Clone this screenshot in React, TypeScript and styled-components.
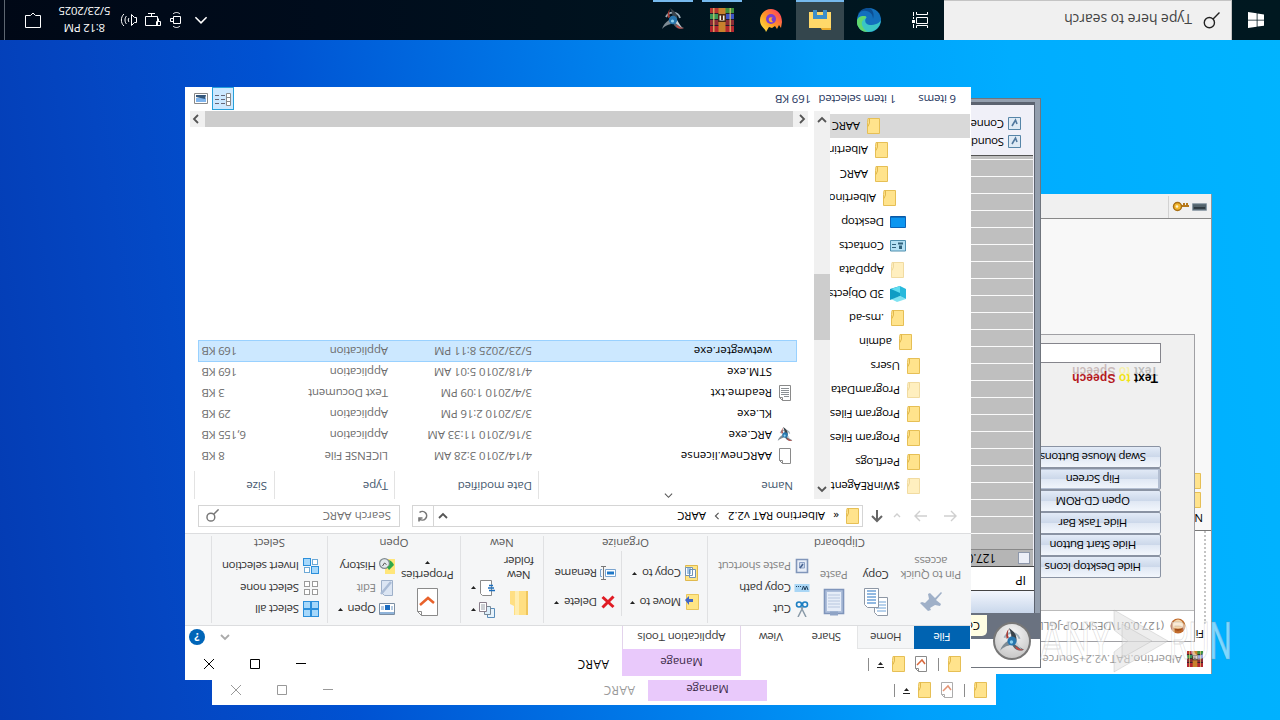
import React from 'react';
import styled, { createGlobalStyle } from 'styled-components';

const GlobalStyle = createGlobalStyle`
  * {
    box-sizing: border-box;
  }

  body {
    margin: 0;
    overflow: hidden;
    background: #0050cc;
  }

  svg {
    display: block;
    flex: none;
  }
`;

const Stage = styled.div`
  position: relative;
  width: 1280px;
  height: 720px;
  overflow: hidden;
`;

/* the whole desktop is turned upside down */
const Screen = styled.div`
  position: relative;
  width: 1280px;
  height: 720px;
  display: flex;
  flex-direction: column;
  transform: rotate(180deg);
  font-family: 'Open Sans', 'Noto Sans', sans-serif;
  font-size: 11.5px;
  letter-spacing: -0.33px;
  line-height: 14px;
  color: #000;
  white-space: nowrap;
  background: linear-gradient(
    262deg,
    #043bb2 0%,
    #0446c2 13%,
    #0052d2 26%,
    #007cea 48%,
    #009ffb 66%,
    #00adff 80%,
    #00b4ff 100%
  );
`;

const Desktop = styled.div`
  position: relative;
  flex: 1;
`;

const Spacer = styled.span<{ $w?: number; $h?: number }>`
  flex: none;
  width: ${props => props.$w || 0}px;
  height: ${props => props.$h || 0}px;
`;

/* ---------- icons ---------- */

const FolderIcon = ({ pale }: { pale?: boolean }) => (
  <svg width="16" height="16" viewBox="0 0 16 16" opacity={pale ? 0.55 : 1}>
    <path d="M2.500 .5h12v11l-.5 4h-11.500z" fill="#ffe38c" stroke="#e6bf55" />
    <path d="M12.500 15.500V11l1.500-3.500" fill="none" stroke="#e2b84a" />
  </svg>
);

const PageIcon = ({ check, lines, faded }: { check?: boolean; lines?: boolean; faded?: boolean }) => (
  <svg width="16" height="16" viewBox="0 0 16 16" opacity={faded ? 0.7 : 1}>
    <path d="M2.500 .5h8l3 3v12h-11z" fill="#fff" stroke="#8a8a8a" />
    <path d="M10.500 .5v3h3" fill="none" stroke="#8a8a8a" />
    {check && <path d="M4 8l3 4 5-5" fill="none" stroke="#d9683c" strokeWidth="1.500" />}
    {lines && <path d="M4 4.500h5M4 6.500h8M4 8.500h8M4 10.500h8M4 12.500h8" stroke="#8b9094" />}
  </svg>
);

const ArcIcon = ({ size = 16 }: { size?: number }) => (
  <svg width={size} height={size} viewBox="0 0 24 24">
    <path d="M5 14a7.500 7.500 0 0 0 14 1" fill="none" stroke="#9fb0ba" strokeWidth="1.800" />
    <path d="M1 4c5-2 9 0 11 5l-4 3C7 8 5 6 1 4z" fill="#59636b" />
    <path d="M1 4c3-1 6-1 8 2l-1 1C6 5 4 4 1 4z" fill="#c84a42" />
    <path d="M23 3c-3 3-5 4-9 5l2 4c3-2 6-5 7-9z" fill="#7e8b94" />
    <path d="M15 24c-5-3-8-7-7-12l5 2c-1 3 0 6 2 10z" fill="#39434a" />
    <path d="M3 4l8 6-3 2z" fill="#c8d1d7" />
    <circle cx="12" cy="12" r="4.200" fill="#2876ad" />
    <circle cx="12.500" cy="11" r="1.600" fill="#8fd0ee" />
    <path d="M15 23c2-2 3-5 2-9l-2 1c1 3 1 5 0 8z" fill="#a63a34" />
  </svg>
);

const WinrarIcon = ({ size = 24 }: { size?: number }) => (
  <svg width={size} height={size} viewBox="0 0 24 24">
    <path d="M0 0h24v6H0z" fill="#b3262f" />
    <path d="M0 6h24v6H0z" fill="#8c2c36" />
    <path d="M0 12h24v6H0z" fill="#3d53c4" />
    <path d="M14 12h10v6H14z" fill="#3a9656" />
    <path d="M0 18h24v6H0z" fill="#3f8f3c" />
    <path d="M14 18h10v6H14z" fill="#b8352f" />
    <path d="M0 6h24v1H0zM0 12h24v1H0zM0 18h24v1H0z" fill="#231c2b" />
    <path d="M3 0h1.500v24H3zM19.500 0H21v24h-1.500z" fill="#e6cf72" opacity=".7" />
    <path d="M8.500 0h7v24h-7z" fill="#c8812c" />
    <path d="M8 10h8v8H8z" fill="#4a2b16" />
    <path d="M9.500 11.500h5v5h-5z" fill="#f0efe6" />
    <path d="M11 12h2v5h-2z" fill="#5a3620" />
  </svg>
);

const Chevron = ({ dir, color = '#555', size = 10, w = 1.8 }: { dir: string; color?: string; size?: number; w?: number }) => {
  const paths: Record<string, string> = {
    up: 'M1 7l4-4 4 4',
    down: 'M1 3l4 4 4-4',
    left: 'M7 1L3 5l4 4',
    right: 'M3 1l4 4-4 4'
  };
  return (
    <svg width={size} height={size} viewBox="0 0 10 10">
      <path d={paths[dir]} fill="none" stroke={color} strokeWidth={w} />
    </svg>
  );
};

const Caret = ({ color = '#222' }: { color?: string }) => (
  <svg width="5" height="3" viewBox="0 0 5 3">
    <path d="M0 0h5L2.500 3z" fill={color} />
  </svg>
);

/* ---------- explorer window ---------- */

const ExplorerFrame = styled.div<{ $back?: boolean }>`
  position: absolute;
  left: ${props => (props.$back ? 284 : 309)}px;
  top: ${props => (props.$back ? 15 : 40)}px;
  width: ${props => (props.$back ? 784 : 786)}px;
  height: ${props => (props.$back ? 560 : 593)}px;
  display: flex;
  flex-direction: column;
  background: #fff;
  overflow: hidden;
`;

const TitleBar = styled.div<{ $inactive?: boolean }>`
  height: 31px;
  flex: none;
  display: flex;
  align-items: center;
  padding-bottom: ${props => (props.$inactive ? 2 : 0)}px;
`;

const QuickBar = styled.div<{ $inactive?: boolean }>`
  display: flex;
  align-items: center;
  width: ${props => (props.$inactive ? 229 : 230)}px;
  padding-left: ${props => (props.$inactive ? 7 : 8)}px;
`;

const QuickSep = styled.i<{ $l: number; $r: number }>`
  width: 1px;
  height: 13px;
  margin: 0 ${props => props.$r}px 0 ${props => props.$l}px;
  background: #8c8c8c;
`;

const QuickArrow = styled.span`
  width: 7px;
  height: 7px;
  margin-left: 7px;
  border-top: 1px solid #222;
  padding: 2px 0 0 1px;
`;

const ManageTab = styled.div<{ $inactive?: boolean }>`
  width: 119px;
  height: 27px;
  margin-bottom: ${props => (props.$inactive ? -2 : 0)}px;
  align-self: flex-end;
  padding-top: ${props => (props.$inactive ? 5 : 7)}px;
  text-align: center;
  letter-spacing: -0.1px;
  background: #e9c9fb;
  color: #3c2a48;
`;

const WindowTitle = styled.div<{ $inactive?: boolean }>`
  flex: 1;
  padding-left: 13px;
  font-size: 12px;
  letter-spacing: 0.35px;
  color: ${props => (props.$inactive ? '#999' : '#000')};
`;

const Controls = styled.div<{ $inactive?: boolean }>`
  display: flex;
  margin-right: 1px;
  color: ${props => (props.$inactive ? '#999' : '#000')};
`;

const Control = styled.div`
  width: 46px;
  display: flex;
  justify-content: center;
`;

const TabRow = styled.div`
  height: 23px;
  flex: none;
  display: flex;
  line-height: 23px;
  text-align: center;
  color: #3b3b3b;
`;

const FileTab = styled.div`
  width: 56px;
  margin-left: 1px;
  background: #0063b1;
  color: #fff;
`;

const Tab = styled.div<{ $w: number; $active?: boolean; $tools?: boolean }>`
  width: ${props => props.$w}px;
  line-height: ${props => (props.$active ? 22 : 24)}px;
  background: ${props => (props.$active ? '#f5f6f7' : 'transparent')};
  border: solid ${props => (props.$tools ? '#e3d3ec' : '#e4e5e6')};
  border-width: ${props => (props.$active ? '1px 1px 0 0' : props.$tools ? '0 1px' : '0')};
  margin-left: ${props => (props.$tools ? 5 : 0)}px;
  letter-spacing: ${props => (props.$tools ? -0.2 : -0.35)}px;
`;

const TabEnd = styled.div`
  flex: 1;
  display: flex;
  justify-content: flex-end;
  align-items: center;
  gap: 15px;
  padding: 0 4px 0 0;
`;

const Help = styled.span`
  width: 16px;
  height: 16px;
  border-radius: 50%;
  background: #0065b8;
  color: #fff;
  font-weight: 700;
  font-size: 11px;
  line-height: 16px;
`;

const Ribbon = styled.div`
  height: 93px;
  flex: none;
  display: flex;
  background: #f5f6f7;
  border: solid #dcdddf;
  border-width: 1px 0;
`;

const Group = styled.div<{ $w: number }>`
  width: ${props => props.$w}px;
  margin: 2px 0;
  display: flex;
  flex-direction: column;
  border-right: 1px solid #e0e1e3;
`;

const GroupBody = styled.div<{ $pad: number }>`
  height: 74px;
  display: flex;
  padding-left: ${props => props.$pad}px;
`;

const GroupLabel = styled.div`
  text-align: center;
  color: #5a5a5a;
  letter-spacing: -0.15px;
`;

const BigButton = styled.div<{ $w: number; $off?: boolean }>`
  width: ${props => props.$w}px;
  padding-top: 7px;
  display: flex;
  flex-direction: column;
  align-items: center;
  text-align: center;
  color: ${props => (props.$off ? '#848484' : '#333')};

  svg:first-child {
    margin-bottom: 6px;
  }
`;

const SmallCol = styled.div<{ $h: number; $top: number; $l?: number; $w?: number }>`
  width: ${props => (props.$w ? `${props.$w}px` : 'auto')};
  margin-left: ${props => props.$l || 0}px;
  padding-top: ${props => props.$top}px;

  > div {
    height: ${props => props.$h}px;
  }
`;

const SmallButton = styled.div<{ $off?: boolean; $gap?: number }>`
  display: flex;
  align-items: center;
  gap: ${props => props.$gap || 3}px;
  color: ${props => (props.$off ? '#848484' : '#333')};

  svg:nth-of-type(2) {
    margin-left: 2px;
  }
`;

const ColSep = styled.i`
  width: 1px;
  height: 65px;
  margin-top: 7px;
  background: #dfe0e2;
`;

const NavRow = styled.div`
  height: 34px;
  flex: none;
  display: flex;
  align-items: center;
  padding: 0 13px 0 14px;
`;

const NavArrows = styled.div`
  width: 94px;
  display: flex;
  align-items: center;
`;

const Address = styled.div`
  width: 451px;
  height: 22px;
  display: flex;
  align-items: center;
  border: 1px solid #d5d5d5;
  padding-left: 1px;
  letter-spacing: -0.05px;
`;

const Crumb = styled.span<{ $w: number }>`
  width: ${props => props.$w}px;
`;

const Refresh = styled.div`
  width: 21px;
  height: 20px;
  margin-left: 4px;
  border-left: 1px solid #d5d5d5;
  display: flex;
  align-items: center;
  justify-content: center;
`;

const SearchBox = styled.div`
  width: 202px;
  height: 22px;
  margin-left: auto;
  padding: 0 7px 0 8px;
  display: flex;
  align-items: center;
  justify-content: space-between;
  border: 1px solid #d5d5d5;
  color: #6f6f6f;
  letter-spacing: 0;
`;

const Content = styled.div`
  height: 388px;
  flex: none;
  display: flex;
`;

const Tree = styled.div`
  width: 141px;
  padding-top: 1px;
  overflow: hidden;
  letter-spacing: -0.25px;
`;

const TreeItem = styled.div<{ $indent: number; $selected?: boolean }>`
  height: 24px;
  display: flex;
  align-items: center;
  gap: 6px;
  margin-left: 1px;
  padding-left: ${props => 48 + props.$indent * 8}px;
  background: ${props => (props.$selected ? '#d9d9d9' : 'transparent')};
`;

const TreeScroll = styled.div`
  width: 16px;
  display: flex;
  flex-direction: column;
  align-items: center;
  justify-content: space-between;
  padding: 5px 0 4px;
  background: #f0f0f0;
`;

const VThumb = styled.div`
  width: 16px;
  height: 66px;
  margin-bottom: 5px;
  background: #cdcdcd;
`;

const ListPane = styled.div`
  flex: 1;
  display: flex;
  flex-direction: column;
  padding-left: 17px;
`;

const HeaderRow = styled.div`
  height: 28px;
  flex: none;
  display: flex;
  color: #45586e;
  line-height: 26px;
  letter-spacing: -0.15px;
`;

const HeaderCell = styled.div<{ $w: number; $pad: number }>`
  position: relative;
  width: ${props => props.$w}px;
  padding-left: ${props => props.$pad}px;
  border-right: 1px solid #e3e3e3;
`;

const SortMark = styled.span`
  position: absolute;
  left: 124px;
  top: -1px;
`;

const FileRow = styled.div<{ $selected?: boolean }>`
  width: 599px;
  height: ${props => (props.$selected ? 22 : 21)}px;
  flex: none;
  display: flex;
  align-items: center;
  color: #6d6d6d;
  letter-spacing: -0.17px;
  background: ${props => (props.$selected ? '#cce8ff' : 'transparent')};
  outline: ${props => (props.$selected ? '1px solid #99d1ff' : 'none')};
  outline-offset: -1px;
`;

const FileIcon = styled.span`
  width: 16px;
  height: 16px;
  margin: 0 5px 0 4px;
`;

const FileName = styled.span`
  width: 240px;
  color: #000;
  letter-spacing: 0;
`;

const FileCell = styled.span<{ $w: number }>`
  width: ${props => props.$w}px;
`;

const SizeCell = styled.span`
  width: 42px;
  display: flex;
  justify-content: flex-end;
  letter-spacing: -0.35px;
`;

const HScroll = styled.div`
  height: 16px;
  margin: auto 5px 0 -11px;
  padding: 0 0 0 1px;
  display: flex;
  align-items: center;
  background: #f0f0f0;
`;

const HThumb = styled.div`
  width: 588px;
  height: 16px;
  margin: 0 4px;
  background: #cdcdcd;
`;

const StatusBar = styled.div`
  flex: 1;
  display: flex;
  align-items: center;
  padding: 0 9px 0 15px;
  color: #26365e;
  letter-spacing: -0.25px;
`;

const StatusText = styled.span<{ $w: number }>`
  width: ${props => props.$w}px;
`;

const ViewToggle = styled.span`
  width: 22px;
  height: 23px;
  margin: 0 4px 0 auto;
  display: flex;
  align-items: center;
  justify-content: center;
  background: #cce8ff;
  border: 1px solid #26a0da;
`;

const PasteIcon = () => (
  <svg width="28" height="28" viewBox="0 0 28 28">
    <path d="M4.500 2.500h19v24h-19z" fill="#aebfdb" stroke="#7f95bb" strokeWidth="1.600" />
    <path d="M7 5h14v19H7z" fill="#e6edf8" />
    <path d="M8 9h12M8 12h12M8 15h12M8 18h12M8 21h12" stroke="#b7c6de" />
    <path d="M10 .5h8v4h-8z" fill="#8fa4c6" />
  </svg>
);

const BigCopy = () => (
  <svg width="28" height="28" viewBox="0 0 28 28">
    <path d="M2.500 .5h10l3 3v15h-13z" fill="#fff" stroke="#8d97a5" />
    <path d="M4 5h9M4 8h10M4 11h10M4 14h10" stroke="#6fa3d8" />
    <path d="M11.500 8.500h11l3 3v16h-14z" fill="#fff" stroke="#8d97a5" />
    <path d="M14 13h9M14 16h9M14 19h9M14 22h9M14 25h9" stroke="#6fa3d8" strokeWidth="1.300" />
  </svg>
);

const PinIcon = () => (
  <svg width="28" height="28" viewBox="0 0 28 28">
    <path d="M17 5l8 8-2 1-3-1-4 4 1 5-2 1-5-5-6 6-1-1 6-7-5-4 1-2 5 1 5-3-1-2z" fill="#9fb0c8" />
  </svg>
);

const BigFolder = () => (
  <svg width="28" height="28" viewBox="0 0 28 28">
    <path d="M5 1h14v9l4 2v13H5z" fill="#ffdf83" />
    <path d="M5 1h2v24H5z" fill="#efc65d" />
    <path d="M18 1v24h-4V1z" fill="#ffedb0" />
  </svg>
);

const BigProps = () => (
  <svg width="28" height="28" viewBox="0 0 28 28">
    <path d="M3.500 .5h16l4 4v23h-20z" fill="#fff" stroke="#8a8a8a" />
    <path d="M19.500 .5v4h4" fill="none" stroke="#8a8a8a" />
    <path d="M7 13l6 5 8-7" fill="none" stroke="#e8622c" strokeWidth="2.500" />
  </svg>
);

const CutIcon = () => (
  <svg width="16" height="16" viewBox="0 0 16 16">
    <path d="M4 0l5 10M12 0L7 10" stroke="#8a9aa8" strokeWidth="1.500" />
    <circle cx="5" cy="12.500" r="2.500" fill="none" stroke="#1e7fc2" strokeWidth="1.600" />
    <circle cx="11" cy="12.500" r="2.500" fill="none" stroke="#1e7fc2" strokeWidth="1.600" />
  </svg>
);

const CopyPathIcon = () => (
  <svg width="16" height="16" viewBox="0 0 16 16">
    <path d="M.5 4h15v8H.5z" fill="#a9d6f5" />
    <path d="M2 6l1.500 4L5 6l1.500 4L8 6M9 9.500h1M11 9.500h1M13 9.500h1" fill="none" stroke="#24425e" />
  </svg>
);

const PasteShortcutIcon = () => (
  <svg width="16" height="16" viewBox="0 0 16 16">
    <path d="M2.500 1.500h11v13h-11z" fill="#e8eef8" stroke="#8196ba" strokeWidth="1.600" />
    <path d="M5.500 11.500V6h5v5.500z" fill="#cdd9ec" stroke="#8da2c6" />
    <path d="M7 10l3-4" stroke="#46628f" strokeWidth="1.500" />
  </svg>
);

const MoveIcon = () => (
  <svg width="16" height="16" viewBox="0 0 16 16">
    <path d="M1.500 .5h12v15h-12z" fill="#ffe685" stroke="#e9c65c" />
    <path d="M7 8h4V5l4 5-4 4v-3H7z" fill="#4268c8" />
  </svg>
);

const CopyToIcon = () => (
  <svg width="16" height="16" viewBox="0 0 16 16">
    <path d="M2.500 .5h12v15h-12z" fill="#ffe685" stroke="#e0b94e" />
    <path d="M4.500 3.500h6v8h-6zM7.500 5.500h7v8h-7z" fill="#fff" stroke="#7393b5" />
    <path d="M9 8h4M9 10h4M9 12h4" stroke="#4b8bc8" />
  </svg>
);

const DeleteIcon = () => (
  <svg width="16" height="16" viewBox="0 0 16 16">
    <path d="M2.500 3l11 10M13.500 2.500l-11 11" stroke="#e01b24" strokeWidth="3" />
  </svg>
);

const RenameIcon = () => (
  <svg width="16" height="16" viewBox="0 0 16 16">
    <path d="M.5 4.500h10v7H.5z" fill="#fff" stroke="#7aa4cf" />
    <path d="M2 6.500h7v3H2z" fill="#1f78c8" />
    <path d="M10 1.500h5M10 14.500h5M12.500 1.500v13" stroke="#777" />
    <path d="M14 4.500h1.500v7H14" fill="none" stroke="#7aa4cf" />
  </svg>
);

const NewItemIcon = () => (
  <svg width="16" height="16" viewBox="0 0 16 16">
    <path d="M.5 .5h7v9h-7z" fill="#e8f3fb" stroke="#5a8dba" />
    <path d="M4.500 3.500h6v8h-6z" fill="#dceefa" stroke="#788896" />
    <path d="M8.500 6.500h7v9h-7z" fill="#fff" stroke="#8a7f8c" />
    <path d="M10 9h4M10 11h4M10 13h4" stroke="#9aa0a8" />
  </svg>
);

const EasyAccessIcon = () => (
  <svg width="16" height="16" viewBox="0 0 16 16">
    <path d="M3.500 .5h9l2 2v13h-11z" fill="#fff" stroke="#8a8a8a" />
    <path d="M0 5.500h6M1 8h6M2 10.500h4" stroke="#1d6fbd" strokeWidth="1.500" />
  </svg>
);

const OpenIcon = () => (
  <svg width="16" height="16" viewBox="0 0 16 16">
    <path d="M.5 2.500h15v11H.5z" fill="#fff" stroke="#7b8ea3" />
    <path d="M1 3h14v2H1z" fill="#8fb3d9" />
    <path d="M5 7h5v5H5z" fill="#1b6cc0" />
    <path d="M2 8h2M2 10h2M11 8h3M11 10h3" stroke="#6a96c4" />
  </svg>
);

const EditIcon = () => (
  <svg width="16" height="16" viewBox="0 0 16 16">
    <path d="M2.500 .5h8l3 3v12h-11z" fill="#dbe5f3" stroke="#9eb0c9" />
    <path d="M4 14L14 2" stroke="#aabcd6" strokeWidth="2.500" />
  </svg>
);

const HistoryIcon = () => (
  <svg width="16" height="16" viewBox="0 0 16 16">
    <path d="M0 0h10v15H0z" fill="#ffe67a" />
    <circle cx="10.500" cy="10.500" r="4.900" fill="#e2e8ec" stroke="#7f8a90" strokeWidth="1.200" />
    <path d="M12.500 8l-2 3-2-1.500" fill="none" stroke="#555" />
    <path d="M1 9l5-5 2 3-2 1c-1 2-1 4 0 6-3-1-4-3-5-5z" fill="#2fa84a" />
  </svg>
);

const SelectIcon = ({ kind }: { kind: 'all' | 'none' | 'invert' }) => {
  const cells = [[1, 1], [9, 1], [1, 9], [9, 9]];
  return (
    <svg width="16" height="16" viewBox="0 0 16 16">
      {cells.map(([x, y], i) => {
        const filled = kind === 'all' || (kind === 'invert' && (i === 0 || i === 3));
        return (
          <rect
            key={i}
            x={x - (filled ? 0.5 : -0.5)}
            y={y - (filled ? 0.5 : -0.5)}
            width={filled ? 7 : 5}
            height={filled ? 7 : 5}
            fill={filled ? '#a6d8fb' : '#fff'}
            stroke={filled ? '#2b8fdb' : kind === 'none' ? '#9a9a9a' : '#6da9d6'}
          />
        );
      })}
    </svg>
  );
};

const DesktopIcon = () => (
  <svg width="16" height="16" viewBox="0 0 16 16">
    <path d="M.5 2.500h15v11H.5z" fill="#0c96f0" stroke="#0b63b8" />
    <path d="M1 13h14" stroke="#0a4f94" />
  </svg>
);

const ContactsIcon = () => (
  <svg width="16" height="16" viewBox="0 0 16 16">
    <path d="M.5 3h15v10.500H.5z" fill="#b5e1f5" stroke="#4f8fae" />
    <path d="M3 11.500v-2h5v2zM4 5h3v3.500H4z" fill="#31627c" />
    <path d="M10 6.500h4M10 9.500h4" stroke="#31627c" />
  </svg>
);

const ObjectsIcon = () => (
  <svg width="16" height="16" viewBox="0 0 16 16">
    <path d="M9 0l6 3-9 3-6-3z" fill="#7fe3f2" />
    <path d="M0 3l6 3v10l-6-3z" fill="#28b9dc" />
    <path d="M16 2L6 6v10l10-3z" fill="#109cc4" />
    <path d="M6 16V9l9 4z" fill="#5fdcf0" />
  </svg>
);

const MagnifierIcon = ({ size = 13, color = '#777', w = 1.8 }: { size?: number; color?: string; w?: number }) => (
  <svg width={size} height={size} viewBox="0 0 16 16">
    <circle cx="10" cy="6" r="4.800" fill="none" stroke={color} strokeWidth={w} />
    <path d="M6.500 9.500L.5 15.500" stroke={color} strokeWidth={w} />
  </svg>
);

const treeItems = [
  { name: '$WinREAgent', indent: 0, pale: true },
  { name: 'PerfLogs', indent: 0 },
  { name: 'Program Files', indent: 0 },
  { name: 'Program Files (x86)', indent: 0 },
  { name: 'ProgramData', indent: 0, pale: true },
  { name: 'Users', indent: 0 },
  { name: 'admin', indent: 1 },
  { name: '.ms-ad', indent: 2 },
  { name: '3D Objects', indent: 2, icon: <ObjectsIcon /> },
  { name: 'AppData', indent: 2, pale: true },
  { name: 'Contacts', indent: 2, icon: <ContactsIcon /> },
  { name: 'Desktop', indent: 2, icon: <DesktopIcon /> },
  { name: 'Albertino RAT v2.2', indent: 3 },
  { name: 'AARC', indent: 4 },
  { name: 'Albertino RAT v2.2', indent: 4 },
  { name: 'AARC', indent: 5, selected: true }
];

const files = [
  { name: 'AARCnew.license', date: '4/14/2010 3:28 AM', type: 'LICENSE File', size: '8 KB', icon: <PageIcon /> },
  { name: 'ARC.exe', date: '3/16/2010 11:33 AM', type: 'Application', size: '6,155 KB', icon: <ArcIcon /> },
  { name: 'KL.exe', date: '3/3/2010 2:16 PM', type: 'Application', size: '29 KB' },
  { name: 'Readme.txt', date: '3/4/2010 1:09 PM', type: 'Text Document', size: '3 KB', icon: <PageIcon lines /> },
  { name: 'STM.exe', date: '4/18/2010 5:01 AM', type: 'Application', size: '169 KB' },
  { name: 'wetwegter.exe', date: '5/23/2025 8:11 PM', type: 'Application', size: '169 KB', selected: true }
];

const ExplorerTitle = ({ inactive }: { inactive?: boolean }) => (
  <TitleBar $inactive={inactive}>
    <QuickBar $inactive={inactive}>
      <FolderIcon />
      <QuickSep $l={8} $r={9} />
      <PageIcon check faded={inactive} />
      <Spacer $w={6} />
      <FolderIcon />
      <QuickArrow><Caret /></QuickArrow>
      <QuickSep $l={8} $r={0} />
    </QuickBar>
    <ManageTab $inactive={inactive}>Manage</ManageTab>
    <WindowTitle $inactive={inactive}>AARC</WindowTitle>
    <Controls $inactive={inactive}>
      <Control>
        <svg width="10" height="10"><path d="M0 5.500h10" stroke="currentColor" /></svg>
      </Control>
      <Control>
        <svg width="10" height="10"><path d="M.5 .5h9v9h-9z" fill="none" stroke="currentColor" /></svg>
      </Control>
      <Control>
        <svg width="10" height="10"><path d="M0 0l10 10M10 0L0 10" stroke="currentColor" /></svg>
      </Control>
    </Controls>
  </TitleBar>
);

const ExplorerRibbon = () => (
  <Ribbon>
    <Group $w={264}>
      <GroupBody $pad={8}>
        <BigButton $w={64} $off><PinIcon />Pin to Quick<br />access</BigButton>
        <BigButton $w={46}><BigCopy />Copy</BigButton>
        <BigButton $w={38} $off><PasteIcon />Paste</BigButton>
        <SmallCol $h={21.5} $top={3} $l={5}>
          <SmallButton><CutIcon />Cut</SmallButton>
          <SmallButton><CopyPathIcon />Copy path</SmallButton>
          <SmallButton $off><PasteShortcutIcon />Paste shortcut</SmallButton>
        </SmallCol>
      </GroupBody>
      <GroupLabel>Clipboard</GroupLabel>
    </Group>
    <Group $w={164}>
      <GroupBody $pad={7}>
        <SmallCol $h={29} $top={6} $w={78}>
          <SmallButton><MoveIcon />Move to <Caret /></SmallButton>
          <SmallButton><CopyToIcon />Copy to <Caret /></SmallButton>
        </SmallCol>
        <ColSep />
        <SmallCol $h={29} $top={6} $l={5}>
          <SmallButton><DeleteIcon />Delete <Caret /></SmallButton>
          <SmallButton><RenameIcon />Rename</SmallButton>
        </SmallCol>
      </GroupBody>
      <GroupLabel>Organize</GroupLabel>
    </Group>
    <Group $w={83}>
      <GroupBody $pad={0}>
        <BigButton $w={48}><BigFolder />New<br />folder</BigButton>
        <SmallCol $h={22} $top={2}>
          <SmallButton $gap={1}><NewItemIcon /><Caret /></SmallButton>
          <SmallButton $gap={1}><EasyAccessIcon /><Caret /></SmallButton>
        </SmallCol>
      </GroupBody>
      <GroupLabel>New</GroupLabel>
    </Group>
    <Group $w={133}>
      <GroupBody $pad={0}>
        <BigButton $w={65}><BigProps />Properties<br /><Spacer $h={4} /><Caret /></BigButton>
        <SmallCol $h={21.5} $top={3}>
          <SmallButton $gap={3}><OpenIcon />Open <Caret /></SmallButton>
          <SmallButton $gap={3} $off><EditIcon />Edit</SmallButton>
          <SmallButton $gap={3}><HistoryIcon />History</SmallButton>
        </SmallCol>
      </GroupBody>
      <GroupLabel>Open</GroupLabel>
    </Group>
    <Group $w={116}>
      <GroupBody $pad={8}>
        <SmallCol $h={21.5} $top={3}>
          <SmallButton $gap={4}><SelectIcon kind="all" />Select all</SmallButton>
          <SmallButton $gap={4}><SelectIcon kind="none" />Select none</SmallButton>
          <SmallButton $gap={4}><SelectIcon kind="invert" />Invert selection</SmallButton>
        </SmallCol>
      </GroupBody>
      <GroupLabel>Select</GroupLabel>
    </Group>
  </Ribbon>
);

const Explorer = () => (
  <ExplorerFrame>
    <ExplorerTitle />
    <TabRow>
      <FileTab>File</FileTab>
      <Tab $w={57} $active>Home</Tab>
      <Tab $w={61}>Share</Tab>
      <Tab $w={50}>View</Tab>
      <Tab $w={119} $tools>Application Tools</Tab>
      <TabEnd>
        <Chevron dir="up" color="#aaa" />
        <Help>?</Help>
      </TabEnd>
    </TabRow>
    <ExplorerRibbon />
    <NavRow>
      <NavArrows>
        <svg width="86" height="14" viewBox="0 0 86 14">
          <path d="M13 7H1M6 2L1 7l5 5M30 7h12M37 2l5 5-5 5M57 6l3 3 3-3" fill="none" stroke="#cfcfcf" strokeWidth="1.400" />
          <path d="M80 13V2M75 7l5-5 5 5" fill="none" stroke="#666" strokeWidth="2" />
        </svg>
      </NavArrows>
      <Address>
        <FolderIcon />
        <Spacer $w={6} />
        <Crumb $w={14}>«</Crumb>
        <Crumb $w={105}>Albertino RAT v2.2</Crumb>
        <Chevron dir="right" size={8} w={1.4} />
        <Spacer $w={7} />
        <Crumb $w={260}>AARC</Crumb>
        <Chevron dir="down" />
        <Refresh>
          <svg width="12" height="12" viewBox="0 0 12 12">
            <path d="M9.500 3A4.300 4.300 0 1 0 9.500 9.500M10 .5V4H6.500" fill="none" stroke="#777" strokeWidth="1.600" />
          </svg>
        </Refresh>
      </Address>
      <SearchBox>Search AARC<MagnifierIcon /></SearchBox>
    </NavRow>
    <Content>
      <Tree>
        {treeItems.map((item, i) => (
          <TreeItem key={i} $indent={item.indent} $selected={item.selected}>
            {item.icon || <FolderIcon pale={item.pale} />}
            {item.name}
          </TreeItem>
        ))}
      </Tree>
      <TreeScroll>
        <Chevron dir="up" />
        <VThumb />
        <Chevron dir="down" />
      </TreeScroll>
      <ListPane>
        <HeaderRow>
          <HeaderCell $w={259} $pad={4}>
            Name
            <SortMark><Chevron dir="up" size={9} w={1.2} /></SortMark>
          </HeaderCell>
          <HeaderCell $w={144} $pad={6}>Date modified</HeaderCell>
          <HeaderCell $w={120} $pad={6}>Type</HeaderCell>
          <HeaderCell $w={80} $pad={7}>Size</HeaderCell>
        </HeaderRow>
        <Spacer $h={4} />
        {files.map(file => (
          <FileRow key={file.name} $selected={file.selected}>
            <FileIcon>{file.icon}</FileIcon>
            <FileName>{file.name}</FileName>
            <FileCell $w={144}>{file.date}</FileCell>
            <FileCell $w={144}>{file.type}</FileCell>
            <SizeCell>{file.size}</SizeCell>
          </FileRow>
        ))}
        <HScroll>
          <Chevron dir="left" />
          <HThumb />
          <Chevron dir="right" />
        </HScroll>
      </ListPane>
    </Content>
    <StatusBar>
      <StatusText $w={60}>6 items</StatusText>
      <StatusText $w={85}>1 item selected</StatusText>
      <StatusText $w={50}>169 KB</StatusText>
      <ViewToggle>
        <svg width="16" height="14" viewBox="0 0 16 14">
          <path d="M.5 .5h4v12h-4zM.5 4.500h4M.5 8.500h4" fill="#fff" stroke="#888" />
          <path d="M6 2.500h4M12 2.500h4M6 6.500h4M12 6.500h4M6 10.500h4M12 10.500h4" stroke="#667" />
        </svg>
      </ViewToggle>
      <svg width="14" height="11" viewBox="0 0 14 11">
        <path d="M.5 .5h13v10H.5z" fill="#fff" stroke="#888" />
        <path d="M2 2h10v4H2z" fill="#7fb4ec" />
        <path d="M2 9l1-4 9 2v2z" fill="#33577c" />
      </svg>
    </StatusBar>
  </ExplorerFrame>
);

/* ---------- WinRAR ---------- */

const RarFrame = styled.div`
  position: absolute;
  left: 68px;
  top: 46px;
  width: 300px;
  height: 480px;
  display: flex;
  flex-direction: column;
  background: #fff;
  border-left: 1px solid #8f979c;
`;

const RarTitle = styled.div`
  height: 33px;
  flex: none;
  padding: 0 0 4px 8px;
  display: flex;
  align-items: center;
  gap: 5px;
  color: #999;
  letter-spacing: -0.08px;
`;

const RarMenu = styled.div`
  height: 110px;
  flex: none;
  padding-left: 7px;
`;

const RarTools = styled.div`
  height: 93px;
  margin: 3px 0 0 -2px;
  border-left: 2px dotted #c4c4c4;
`;

const RarList = styled.div`
  flex: 1;
  padding: 5px 0 0 8px;
  display: flex;
  flex-direction: column;
  gap: 3px;
  background: #f8f8f8;
  border-top: 1px solid #777;
  border-bottom: 1px solid #888;
`;

const RarStatus = styled.div`
  height: 24px;
  display: flex;
  align-items: center;
  gap: 3px;
  padding: 0 0 2px 4px;
  background: #f0f0f0;

  i {
    width: 1px;
    height: 22px;
    background: #d2d2d2;
  }
`;

const WinRar = () => (
  <RarFrame>
    <RarTitle><WinrarIcon size={16} />Albertino.RAT.v2.2+Source</RarTitle>
    <RarMenu>
      File
      <RarTools />
    </RarMenu>
    <RarList>
      Name
      <FolderIcon />
      <FolderIcon />
    </RarList>
    <RarStatus>
      <svg width="15" height="8" viewBox="0 0 16 8">
        <path d="M.5 .5h15v7H.5z" fill="#53636c" stroke="#8b9aa6" />
        <path d="M2 3h12" stroke="#2d383f" strokeWidth="2" />
      </svg>
      <svg width="17" height="11" viewBox="0 0 17 11">
        <path d="M0 5h8v2H6v2H4V7H3v2H1V7H0z" fill="#b5781a" />
        <circle cx="11.500" cy="5.500" r="4" fill="#f3b72e" stroke="#a86f14" strokeWidth="1.500" />
        <circle cx="12" cy="5.500" r="1.300" fill="#fff4cf" />
      </svg>
      <i />
    </RarStatus>
  </RarFrame>
);

/* ---------- remote fun window ---------- */

const FunFrame = styled.div`
  position: absolute;
  left: 85px;
  top: 78px;
  width: 300px;
  height: 308px;
  display: flex;
  flex-direction: column;
  background: #fff;
  border: 1px solid #a0a0a4;
`;

const FunTitle = styled.div`
  height: 30px;
  flex: none;
  display: flex;
  align-items: center;
  gap: 6px;
  padding: 0 0 1px 8px;
  color: #888;
`;

const FunBody = styled.div`
  flex: 1;
  display: flex;
  flex-direction: column;
  padding: 32px 0 0 33px;
  background: #f0f0f0;
  border-top: 1px solid #bbb;
`;

const FunButton = styled.div<{ $focus?: boolean }>`
  width: 136px;
  height: 22px;
  line-height: 19px;
  text-align: center;
  font-size: 11.5px;
  letter-spacing: -0.4px;
  background: linear-gradient(#f2f6fc, #e0e8f4 48%, #ccd8ea 52%, #e3ebf7);
  border: 1px solid #8a93a3;
  border-radius: 2px;
  box-shadow: ${props => (props.$focus ? 'inset 1px 0 0 1px #b4bfd2' : 'none')};
`;

const Speech = styled.div`
  height: 14px;
  margin: 61px 0 0 3px;
  font-family: 'Liberation Sans', Arial, sans-serif;
  font-weight: 700;
  font-size: 12px;
  letter-spacing: 0.1px;
  text-shadow: 0 7px 0 rgba(90, 90, 90, 0.35);

  b:nth-child(1) {
    color: #f2e413;
    text-shadow: 0 7px 0 rgba(255, 240, 60, 0.4);
  }

  b:nth-child(2) {
    color: #b5191f;
    text-shadow: 0 7px 0 rgba(130, 80, 80, 0.35);
  }
`;

const FunInput = styled.div`
  height: 20px;
  margin-top: 8px;
  background: #fff;
  border: 1px solid #85858c;
`;

const FunWindow = () => (
  <FunFrame>
    <FunTitle>
      <svg width="16" height="16" viewBox="0 0 16 16">
        <circle cx="8" cy="8" r="7.500" fill="#c06a2b" />
        <ellipse cx="8" cy="9" rx="5" ry="5.500" fill="#f7d7ac" />
        <path d="M3 6c2-4 8-4 10 0-3-1-7-1-10 0z" fill="#a14d18" />
      </svg>
      (127.0.0.1\DESKTOP-JGLLJLD)
    </FunTitle>
    <FunBody>
      <FunButton>Hide Desktop Icons</FunButton>
      <FunButton>Hide Start Button</FunButton>
      <FunButton>Hide Task Bar</FunButton>
      <FunButton>Open CD-ROM</FunButton>
      <FunButton $focus>Flip Screen</FunButton>
      <FunButton>Swap Mouse Buttons</FunButton>
      <Speech>Text <b>to</b> <b>Speech</b></Speech>
      <FunInput />
    </FunBody>
  </FunFrame>
);

/* ---------- RAT client ---------- */

const ClientFrame = styled.div`
  position: absolute;
  left: 239px;
  top: 52px;
  width: 300px;
  height: 570px;
  display: flex;
  flex-direction: column;
  background: #949fae;
  border: 1px solid #70757d;
`;

const ClientTitle = styled.div`
  height: 28px;
  flex: none;
  background: #fff;
`;

const ClientTabs = styled.div`
  height: 26px;
  flex: none;
  padding: 3px 0 0 53px;
  background: #6a7280;
`;

const ClientTab = styled.div`
  width: 80px;
  height: 21px;
  padding: 3px 0 0 7px;
  background: #fffde3;
  border-radius: 5px 5px 0 0;
`;

const ClientBody = styled.div`
  flex: 1;
  margin: 0 0 3px 5px;
  display: flex;
  flex-direction: column;
  background: #f0f0f8;
  border: solid #5c6370;
  border-width: 0 0 3px 1px;
`;

const ClientStrip = styled.div`
  height: 22px;
  flex: none;
  background: linear-gradient(#c9d7eb, #f2f6fd);
`;

const GridHeader = styled.div`
  height: 25px;
  flex: none;
  padding: 3px 0 0 8px;
  font-size: 12.5px;
  background: #fff;
  border: solid #444;
  border-width: 1px 0;
`;

const Grid = styled.div`
  height: 411px;
  flex: none;
  margin: 0 0 4px 1px;
  border-bottom: 1px solid #555;
  background: repeating-linear-gradient(#bfbfbf 0 15px, #fafafa 15px 16px, #bfbfbf 16px 17px);
`;

const GridRow = styled.div`
  height: 17px;
  display: flex;
  align-items: center;
  gap: 22px;
  padding-left: 3px;
  font-size: 12px;
  background: #b5b5b5;
  border-bottom: 1px solid #888;

  i {
    width: 12px;
    height: 12px;
    background: #eceff7;
    border: 1px solid #8e98ab;
  }
`;

const ClientOption = styled.div`
  height: 18px;
  display: flex;
  align-items: center;
  gap: 4px;
  padding-left: 13px;
`;

const RoundLogo = styled.div`
  position: absolute;
  left: 9px;
  top: 7px;
  width: 38px;
  height: 38px;
  display: flex;
  align-items: center;
  justify-content: center;
  border-radius: 50%;
  border: 2px solid #777;
  background: radial-gradient(circle at 50% 70%, #f8f8f8, #bdbdbd);
`;

const CheckBox = () => (
  <svg width="13" height="13" viewBox="0 0 13 13">
    <path d="M.5 .5h12v12H.5z" fill="#dfeaf5" stroke="#5685a8" />
    <path d="M4 6l1.500 4L9 4" fill="none" stroke="#51789e" strokeWidth="1.600" />
  </svg>
);

const Client = () => (
  <ClientFrame>
    <ClientTitle />
    <ClientTabs><ClientTab>Connections</ClientTab></ClientTabs>
    <ClientBody>
      <ClientStrip />
      <GridHeader>IP</GridHeader>
      <Grid>
        <GridRow><i />127.0.0.1</GridRow>
      </Grid>
      <ClientOption><CheckBox />Sound notify</ClientOption>
      <ClientOption><CheckBox />Connection notify</ClientOption>
    </ClientBody>
    <RoundLogo><ArcIcon size={26} /></RoundLogo>
  </ClientFrame>
);

/* ---------- taskbar ---------- */

const Taskbar = styled.div`
  height: 40px;
  display: flex;
  align-items: center;
  color: #fff;
  background: linear-gradient(90deg, #001820, #001620 40%, #000c1c 75%, #000816);
`;

const TaskCell = styled.div<{ $active?: boolean; $open?: boolean; $after?: number }>`
  position: relative;
  width: 48px;
  height: 40px;
  margin-right: ${props => props.$after ?? 1}px;
  display: flex;
  align-items: center;
  justify-content: center;
  background: ${props => (props.$active ? '#34464d' : 'transparent')};

  &::after {
    content: '';
    position: absolute;
    bottom: 0;
    left: ${props => (props.$active ? 0 : 4)}px;
    right: ${props => (props.$active ? 0 : 4)}px;
    height: 2px;
    background: ${props => (props.$active || props.$open ? '#76b9ed' : 'transparent')};
  }
`;

const TaskSearch = styled.div`
  width: 288px;
  height: 40px;
  padding-left: 11px;
  display: flex;
  align-items: center;
  gap: 11px;
  color: #444;
  font-size: 14px;
  letter-spacing: -0.05px;
  background: #f0f0f0;
  border: solid #c4c4c4;
  border-width: 0 0 1px 1px;
`;

const SearchText = styled.span`
  padding-top: 2px;
`;

const Tray = styled.div`
  margin-left: auto;
  display: flex;
  align-items: center;
`;

const TrayIcon = styled.div<{ $w?: number }>`
  width: ${props => props.$w || 24}px;
  display: flex;
  justify-content: center;
`;

const Clock = styled.div`
  width: 65px;
  text-align: center;
  line-height: 17px;
  letter-spacing: -0.3px;
`;

const ShowDesktop = styled.i`
  width: 5px;
  height: 40px;
  border-left: 1px solid #5d6670;
`;

const TaskbarView = () => (
  <Taskbar>
    <TaskCell $after={0}>
      <svg width="16" height="16" viewBox="0 0 16 16">
        <path d="M0 2.300l6.500-.9v6.100H0zM7.300 1.300L16 0v7.500H7.300zM0 8.300h6.500v6.200L0 13.600zM7.300 8.300H16V16l-8.700-1.300z" fill="#fff" />
      </svg>
    </TaskCell>
    <TaskSearch>
      <MagnifierIcon size={17} color="#222" w={1.3} />
      <SearchText>Type here to search</SearchText>
    </TaskSearch>
    <TaskCell $after={3}>
      <svg width="17" height="16" viewBox="0 0 17 16">
        <path d="M.5 0v2.500h11V0M.5 16v-2.500h11V16M.5 4.500h11v6H.5z" fill="none" stroke="#fff" />
        <path d="M13 5h3v3h-3z" fill="#fff" />
        <path d="M14.500 0v4M14.500 9v2M14.500 12v4" stroke="#fff" />
      </svg>
    </TaskCell>
    <TaskCell>
      <svg width="24" height="24" viewBox="0 0 24 24">
        <circle cx="12" cy="12" r="12" fill="#1370bd" />
        <path d="M0 12C1 3 8 0 13 0c7 0 11 5 11 10 0 4-3 6-7 6-2 0-3-1-2-2 2-3 0-7-4-7C6 7 1 9 0 12z" fill="#3ac6c4" />
        <path d="M13 0c7 0 11 5 11 10 0 4-3 6-7 6-2 0-3-1-2-2 2-1 5-3 4-7C18 4 16 1 13 0z" fill="#62d86c" />
        <path d="M8 13c0 5 4 9 10 8 2 0 3-1 5-3-2 4-6 6-11 6-3-1-6-5-4-11z" fill="#0c4f94" />
      </svg>
    </TaskCell>
    <TaskCell $active>
      <svg width="22" height="22" viewBox="0 0 22 22">
        <path d="M0 1h9l2 3H0z" fill="#e9a92a" />
        <path d="M0 3h22v16H0z" fill="#ffd869" />
        <path d="M4 12h14v9h-4v-5H8v5H4z" fill="#3d8fc9" />
      </svg>
    </TaskCell>
    <TaskCell>
      <svg width="24" height="24" viewBox="0 0 24 24">
        <defs>
          <linearGradient id="fox" x1="1" y1="0" x2="0" y2="1">
            <stop offset="0" stopColor="#fff04a" />
            <stop offset=".45" stopColor="#ff9a24" />
            <stop offset="1" stopColor="#ff2b6a" />
          </linearGradient>
        </defs>
        <path d="M1 10l1-6 2 3 2-4 2 3 3-2 3 1 3-5c1 4 6 5 6 12 0 6-5 11-11 11S1 18 1 10z" fill="url(#fox)" />
        <circle cx="12" cy="13" r="5" fill="#7a3fd0" />
        <path d="M10 10c3-1 5 1 4 4-1 1-3 1-4 0 2 0 2-2 0-4z" fill="#ffac33" />
      </svg>
    </TaskCell>
    <TaskCell $open><WinrarIcon /></TaskCell>
    <TaskCell $open><ArcIcon size={24} /></TaskCell>
    <Tray>
      <TrayIcon><Chevron dir="up" color="#fff" size={14} w={1.1} /></TrayIcon>
      <TrayIcon>
        <svg width="13" height="16" viewBox="0 0 13 16">
          <path d="M2.500 4.500h7v7h-7zM9.500 6.500h3v3h-3M3 2c2-2 5-2 7 0M3 14c2 2 5 2 7 0" fill="none" stroke="#fff" />
        </svg>
      </TrayIcon>
      <TrayIcon>
        <svg width="16" height="14" viewBox="0 0 16 14">
          <path d="M3.500 1.500h12v9h-12zM.5 1.500h4v4h-4zM9.500 10.500v3M6 13.500h7M2.500 5.500v3" fill="none" stroke="#fff" />
        </svg>
      </TrayIcon>
      <TrayIcon>
        <svg width="17" height="14" viewBox="0 0 17 14">
          <path d="M.5 4.500h2l3-3v11l-3-3h-2zM8 5c1 1 1 3 0 4M10.500 3c2 2 2 6 0 8M13 1c3.500 3 3.500 9 0 12" fill="none" stroke="#fff" />
        </svg>
      </TrayIcon>
      <Clock>8:12 PM<br />5/23/2025</Clock>
      <TrayIcon $w={37}>
        <svg width="16" height="16" viewBox="0 0 16 16">
          <path d="M.5 .5h15v12h-5l-2.500 2.500-2.500-2.500h-5z" fill="none" stroke="#fff" />
        </svg>
      </TrayIcon>
      <Spacer $w={10} />
      <ShowDesktop />
    </Tray>
  </Taskbar>
);

/* ---------- watermark, always upright ---------- */

const Watermark = styled.svg`
  position: absolute;
  left: 1030px;
  top: 600px;
  font-family: Roboto, 'Open Sans', sans-serif;
`;

const WatermarkView = () => (
  <Watermark width="210" height="80" viewBox="0 0 210 80">
    <g fill="#fff" fillOpacity=".5" stroke="#8c8c8c" strokeOpacity=".28" strokeWidth="1">
      <text x="10" y="59" fontSize="52" textLength="72" lengthAdjust="spacingAndGlyphs">ANY</text>
      <text x="139" y="59" fontSize="52" textLength="63" lengthAdjust="spacingAndGlyphs">RUN</text>
    </g>
    <g fill="#ddd" fillOpacity=".5" stroke="#999" strokeOpacity=".25">
      <path d="M84 10l54 31-54 31V52l14-11-14-11z" />
      <path d="M92 24v34l30-17z" />
    </g>
  </Watermark>
);

const App: React.FC = () => {
  return (
    <>
      <GlobalStyle />
      <Stage>
        <Screen>
          <Desktop>
            <ExplorerFrame $back>
              <ExplorerTitle inactive />
              <TabRow><FileTab>File</FileTab></TabRow>
            </ExplorerFrame>
            <WinRar />
            <FunWindow />
            <Client />
            <Explorer />
          </Desktop>
          <TaskbarView />
        </Screen>
        <WatermarkView />
      </Stage>
    </>
  );
};

export default App;
